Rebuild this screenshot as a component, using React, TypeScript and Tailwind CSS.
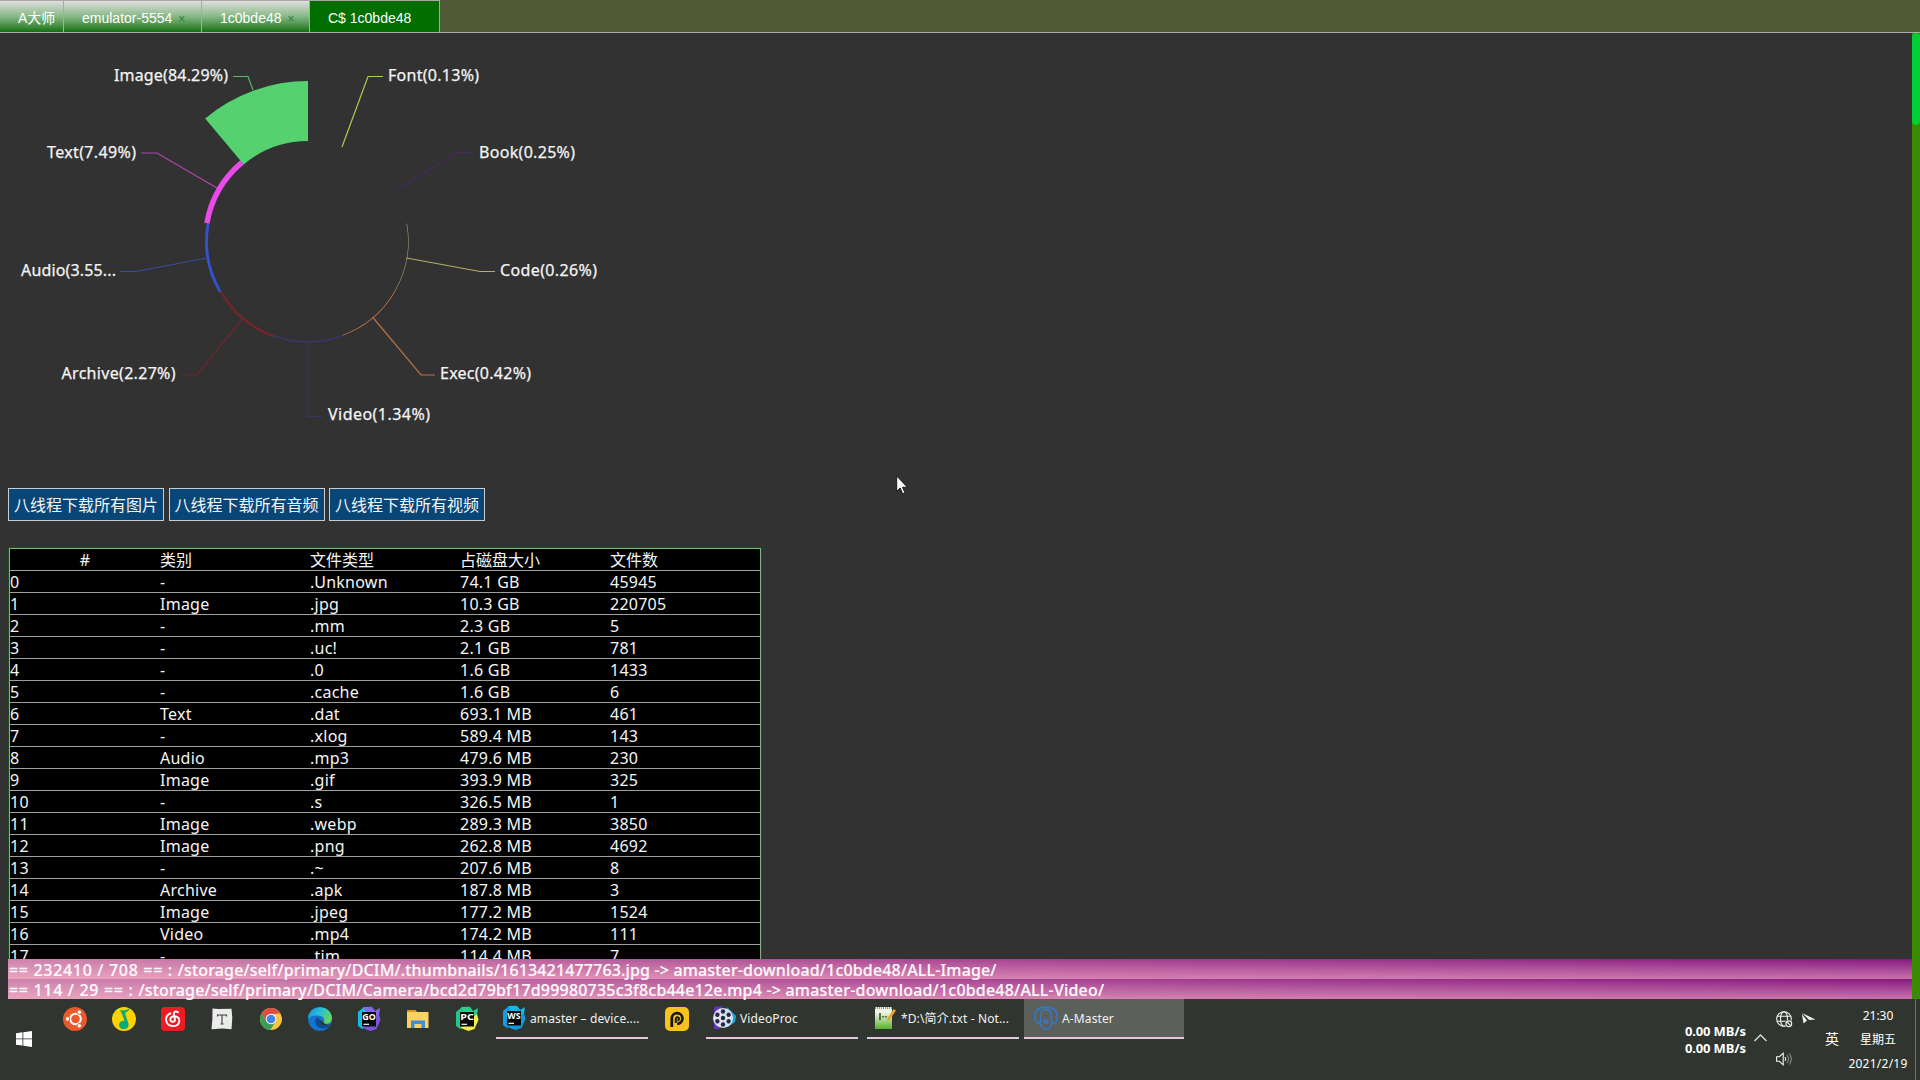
import React from "react";

const sans = "font-['Noto_Sans','Noto_Sans_CJK_SC',sans-serif]";

const CX = 308;
const CY = 208;
const pt = (r: number, deg: number) => {
  const a = (deg * Math.PI) / 180;
  return `${CX + r * Math.sin(a)} ${CY - r * Math.cos(a)}`;
};
const sector = (from: number, to: number, inner: number, outer: number) =>
  `M${pt(outer, from)}A${outer} ${outer} 0 0 1 ${pt(outer, to)}L${pt(inner, to)}A${inner} ${inner} 0 0 0 ${pt(inner, from)}Z`;

type Slice = { label: string; color: string; stroke: string; outer: number; line: string; x: number; y: number; w: number };
const slices: Slice[] = [
  { label: "Font(0.13%)", color: "#a9cf52", stroke: "#a9cf52", outer: 100, line: "342,114 368,43.500 383,43.500", x: 388, y: 48, w: 91 },
  { label: "Book(0.25%)", color: "#39304a", stroke: "#482a5e", outer: 100.6, line: "395,158 457,119.500 474,119.500", x: 479, y: 125, w: 96 },
  { label: "Code(0.26%)", color: "#a39c66", stroke: "#b6ae6c", outer: 100.6, line: "406.5,225 480,238.500 495,238.500", x: 500, y: 243, w: 97 },
  { label: "Exec(0.42%)", color: "#b87248", stroke: "#b87248", outer: 100.8, line: "372.5,284 421,342 435,342", x: 440, y: 346, w: 91 },
  { label: "Video(1.34%)", color: "#3d3466", stroke: "#3b3362", outer: 101.5, line: "308,309 308,383.500 323,383.500", x: 328, y: 387, w: 102 },
  { label: "Archive(2.27%)", color: "#7a242a", stroke: "#6e262b", outer: 102.2, line: "243,285 197,342 181,342", x: 61.5, y: 346, w: 114 },
  { label: "Audio(3.55...", color: "#3651cd", stroke: "#364da6", outer: 102.9, line: "207,225 136,238.500 120,238.500", x: 21, y: 243, w: 95 },
  { label: "Text(7.49%)", color: "#ea4aea", stroke: "#b444b4", outer: 105.4, line: "217,155 157,120 141,120", x: 47, y: 125, w: 89 },
  { label: "Image(84.29%)", color: "#55d26f", stroke: "#55b86b", outer: 160, line: "253,57 248,43.500 233,43.500", x: 114, y: 48, w: 114 },
];

const rows = [
  ["-", ".Unknown", "74.1 GB", "45945"],
  ["Image", ".jpg", "10.3 GB", "220705"],
  ["-", ".mm", "2.3 GB", "5"],
  ["-", ".uc!", "2.1 GB", "781"],
  ["-", ".0", "1.6 GB", "1433"],
  ["-", ".cache", "1.6 GB", "6"],
  ["Text", ".dat", "693.1 MB", "461"],
  ["-", ".xlog", "589.4 MB", "143"],
  ["Audio", ".mp3", "479.6 MB", "230"],
  ["Image", ".gif", "393.9 MB", "325"],
  ["-", ".s", "326.5 MB", "1"],
  ["Image", ".webp", "289.3 MB", "3850"],
  ["Image", ".png", "262.8 MB", "4692"],
  ["-", ".~", "207.6 MB", "8"],
  ["Archive", ".apk", "187.8 MB", "3"],
  ["Image", ".jpeg", "177.2 MB", "1524"],
  ["Video", ".mp4", "174.2 MB", "111"],
  ["-", ".tim", "114.4 MB", "7"],
];

function Tabs() {
  const tab =
    "flex h-8 items-center border-r border-t border-[#a9a9a9] bg-linear-to-b from-[#e2dede] via-[#85b885] to-[#087208] pt-1 text-[14px] whitespace-nowrap text-white";
  const close = <span className="ml-[6px] text-[12px] leading-none text-[#2d7d3f]">×</span>;
  return (
    <nav className="flex h-[33px] border-b border-[#a9a9a9] bg-[#505a35] font-['Liberation_Sans','Noto_Sans_CJK_SC',sans-serif]">
      <div className={`${tab} w-16 pl-[18px]`}>A大师</div>
      <div className={`${tab} w-[138px] pl-[18px]`}>emulator-5554{close}</div>
      <div className={`${tab} w-[108px] pl-[18px]`}>1c0bde48{close}</div>
      <div className="flex h-8 w-[130px] items-center border-r border-t border-[#a9a9a9] bg-[#006e00] pt-1 pl-[18px] text-[14px] text-white">
        C$ 1c0bde48
      </div>
    </nav>
  );
}

function RoseChart() {
  return (
    <svg className="block h-[455px] w-[640px]" viewBox="0 0 640 455">
      {slices.map((s, i) => (
        <g key={s.label}>
          {i > 0 && <path d={sector(i * 40, i * 40 + 40, 100, s.outer)} fill={s.color} />}
          <polyline points={s.line} fill="none" stroke={s.stroke} strokeWidth="1.200" />
          <text x={s.x} y={s.y} textLength={s.w} fill="#f4f4f4" stroke="#f4f4f4" strokeWidth=".25" fontSize="16" className={sans}>
            {s.label}
          </text>
        </g>
      ))}
    </svg>
  );
}

function FileTable() {
  return (
    <div className="mt-[26px] ml-2 w-[754px] border border-[#1c4f20]">
      <div className="border border-[#7fb382] bg-black text-[16px] leading-[22px] tracking-[0.25px] text-[#f5f5f5]">
        <div className="grid h-[22px] grid-cols-[150px_150px_150px_150px_150px] border-b border-[#a0a0a0] tracking-normal">
          <span className="text-center">#</span>
          <span>类别</span>
          <span>文件类型</span>
          <span>占磁盘大小</span>
          <span>文件数</span>
        </div>
        {rows.map((r, i) => (
          <div key={i} className="grid h-[22px] grid-cols-[150px_150px_150px_150px_150px] border-b border-[#a0a0a0]">
            <span>{i}</span>
            {r.map((c, j) => (
              <span key={j}>{c}</span>
            ))}
          </div>
        ))}
      </div>
    </div>
  );
}

const Ubuntu = () => (
  <svg className="size-6" viewBox="0 0 24 24">
    <circle cx="12" cy="12" r="12" fill="#e9592a" />
    <circle cx="12.5" cy="12" r="5.3" fill="none" stroke="#fff" strokeWidth="2" />
    {[[4.600, 12], [16.300, 5.200], [16.300, 18.800]].map(([x, y]) => (
      <circle key={`${x}-${y}`} cx={x} cy={y} r="2.300" fill="#fff" stroke="#e9592a" strokeWidth="1" />
    ))}
  </svg>
);
const QQMusic = () => (
  <svg className="size-6" viewBox="0 0 24 24">
    <circle cx="12" cy="12" r="12" fill="#fdd400" />
    <path d="M8 3c4 1 7 0 10-2-1 3-4 4-5 5l3.500 11-3-1-3.500-9z" fill="#08a878" />
    <ellipse cx="11.8" cy="18" rx="4.8" ry="4.3" fill="#08a878" />
  </svg>
);
const Netease = () => (
  <svg className="size-6" viewBox="0 0 24 24">
    <rect width="24" height="24" rx="4" fill="#ef1b22" />
    <path
      d="M9.300 6.300C3 9 3.800 19 12 19c7.500 0 8.500-9.300 1.800-9.800-5.300-.3-5.800 5.600-2 5.600 3 0 2.300-2.800 1.200-6.800-.8-3 1.500-4.500 4-2.700"
      fill="none"
      stroke="#fff"
      strokeWidth="1.900"
      strokeLinecap="round"
    />
  </svg>
);
const Typora = () => (
  <svg className="size-6" viewBox="0 0 24 24">
    <path d="M2.500 1.500l6 .6 13-.3.800 9-.8 11.400-9-.6-11 .6L2.400 12z" fill="#ececec" />
    <path d="M7.500 9.500V8h9v1.500M12 8v9m-1.500 0h3" stroke="#3b3b3b" strokeWidth="1.100" fill="none" />
  </svg>
);
const Chrome = () => (
  <svg className="size-6" viewBox="0 0 24 24">
    <circle cx="12" cy="12" r="11" fill="#f8c63c" />
    <path d="M2.500 6.500A11 11 0 0 1 21.500 6.500L12 7l-4.300 7.500z" fill="#d95040" />
    <path d="M2.500 6.500l5.200 8 4.300 2.500 4.200-2-5 8A11 11 0 0 1 2.500 6.500z" fill="#3b9c56" />
    <circle cx="12" cy="12" r="5.300" fill="#f4f4f4" />
    <circle cx="12" cy="12" r="4.300" fill="#4582ee" />
  </svg>
);
const Edge = () => (
  <svg className="size-6" viewBox="0 0 24 24">
    <defs>
      <linearGradient id="edgeTop" x2="1" y2=".4">
        <stop stopColor="#1590d8" />
        <stop offset=".55" stopColor="#2cc0d4" />
        <stop offset="1" stopColor="#64d55c" />
      </linearGradient>
    </defs>
    <circle cx="12" cy="12" r="12" fill="#1373ce" />
    <path d="M.2 10C2-3 23-3 24 11c0 5-4.500 6.500-8.500 5.500 2-3 0-8-5-8C5.500 8 1 9 .2 13z" fill="url(#edgeTop)" />
    <path d="M8.500 10c-4 8 3 14 12 10.300 1-.5 1.600-1.300 1.900-2-5 2.300-11.200.2-10-5.300z" fill="#0c4a94" />
    <path d="M12.200 13c-1 5 5 7.500 11 4.500V17c-3 1-6 .5-7.300-1z" fill="#30362f" />
  </svg>
);
const JetBrains = ({ label, colors }: { label: string; colors: string[] }) => (
  <svg className="size-6 overflow-visible" viewBox="0 0 24 24">
    <path d="M1 5L7 0l9 2-2 14-9 6-4-3z" fill={colors[0]} />
    <path d="M6 0l9-.2L18 4l5-3-1 7-8 5z" fill={colors[1]} />
    <path d="M22 7l1.500 6-4 9-6 2-8-3z" fill={colors[2]} />
    <rect x="5" y="5" width="14" height="14.500" fill="#080808" />
    <text x="5.300" y="12.500" fontSize="9" textLength="13.500" lengthAdjust="spacingAndGlyphs" fontWeight="700" fill="#fff" className={sans}>
      {label}
    </text>
    <path d="M6.500 17.300h5.500" stroke="#fff" strokeWidth="1.200" />
  </svg>
);
const Folder = () => (
  <svg className="size-6" viewBox="0 0 24 24">
    <path d="M1 3h8l2 2h11.500v16H1z" fill="#fbd160" />
    <path d="M1 3h8l1.500 2H1z" fill="#dc9a12" />
    <path d="M5 21v-7.500h14V21h-3.500v-4h-7v4z" fill="#3d8fd6" />
  </svg>
);
const Potplayer = () => (
  <svg className="size-6" viewBox="0 0 24 24">
    <rect width="24" height="24" rx="5" fill="#fac21c" />
    <path d="M6.800 20v-8.500a5.300 5.300 0 1 1 5.400 5.300" stroke="#16191b" strokeWidth="2.800" fill="none" />
    <path d="M10.800 16v-4a1.600 1.600 0 1 1 1.600 1.500" stroke="#16191b" strokeWidth="2" fill="none" />
  </svg>
);
const VideoProc = () => (
  <svg className="size-6" viewBox="0 0 24 24">
    <path d="M2 1l9-1-5 8-4 3zM2 13l6 10H2z" fill="#6335bd" />
    <path d="M15 1l9 9-1 6-7 5z" fill="#19a8e0" />
    <circle cx="11" cy="12" r="10" fill="#dde1ee" />
    {[0, 60, 120, 180, 240, 300].map((a) => (
      <circle key={a} cx="11" cy="5.500" r="2.200" fill="#232b45" transform={`rotate(${a} 11 12)`} />
    ))}
    <circle cx="11" cy="12" r="2.200" fill="#232b45" />
  </svg>
);
const Notepad = () => (
  <svg className="size-6" viewBox="0 0 24 24">
    <defs>
      <linearGradient id="note" x2="0" y2="1">
        <stop offset=".25" stopColor="#eef5e2" />
        <stop offset="1" stopColor="#55b22c" />
      </linearGradient>
    </defs>
    <path d="M2 1h17v22H2z" fill="url(#note)" />
    <path d="M2 2h17" stroke="#8d9b82" strokeWidth="2" strokeDasharray="1 1" />
    <path d="M7 7v7m3-4v1.500m3-1.500v1.500" stroke="#334a2b" strokeWidth="1.500" />
    <path d="M20.500 3l2.500 1.500-7 10-2 1 .5-3z" fill="#eba321" />
  </svg>
);
const AMaster = () => (
  <svg className="size-6" viewBox="0 0 24 24" fill="none" stroke="#3178d4" strokeWidth="1.500">
    <path d="M8.500 1.500C-1.500 2.500-.5 17 4.500 17.500c3.500-1 1.500-9 3.500-12.500 2-2.500 6-2.500 8 0 2 3.500 0 11.500 3.500 12.500 5-.5 6-15-4-16M8.500 1.500C10 1 14 1 15.500 1.500" />
    <path d="M6.500 17c.5 8 10.500 8 11 0M9.800 15.500c1-2 3.400-2 4.400 0L12 17.500z" />
  </svg>
);

function Task({ icon, title, wide }: { icon: React.ReactNode; title: string; wide?: boolean }) {
  return (
    <div
      className={`flex h-10 items-center gap-[4px] border-b-2 border-[#e3c7dd] text-[12px] tracking-[0.12px] ${wide ? "w-40 bg-[#5c605b] pl-[10px]" : "w-[152px] pl-[6px]"}`}
    >
      {icon}
      <span className="pt-0.5 whitespace-nowrap text-[#f2f2f2]">{title}</span>
    </div>
  );
}

function Taskbar() {
  return (
    <footer className="flex h-[81px] bg-[#30362f] text-white">
      <svg className="mt-8 ml-4 size-4" viewBox="0 0 16 16" fill="#fff">
        <path d="M0 2.200L6.500 1.300v6.200H0zM7.300 1.200L16 0v7.500H7.300zM0 8.300h6.500v6.300L0 13.700zM7.300 8.300H16V16l-8.700-1.200z" />
      </svg>
      <div className="ml-[31px] flex h-10 gap-[25px] pt-2">
        <Ubuntu />
        <QQMusic />
        <Netease />
        <Typora />
        <Chrome />
        <Edge />
        <JetBrains label="GO" colors={["#16bde0", "#8267e8", "#7b54dc"]} />
        <Folder />
        <JetBrains label="PC" colors={["#21c78c", "#2ecc88", "#f3ec4c"]} />
      </div>
      <div className="ml-[17px] flex h-10 w-[700px]">
        <Task title="amaster – device...." icon={<JetBrains label="WS" colors={["#109fe0", "#12b8e8", "#0e9be0"]} />} />
        <div className="ml-[17px] pt-2">
          <Potplayer />
        </div>
        <div className="ml-[17px]">
          <Task title="VideoProc" icon={<VideoProc />} />
        </div>
        <div className="ml-[9px]">
          <Task title="*D:\简介.txt - Not..." icon={<Notepad />} />
        </div>
        <div className="ml-[5px]">
          <Task wide title="A-Master" icon={<AMaster />} />
        </div>
      </div>
      <div className="ml-auto flex">
        <div className="mt-6 w-[64px] text-[13px] leading-[17px] font-bold tracking-[-0.15px] whitespace-nowrap">
          <div>0.00 MB/s</div>
          <div>0.00 MB/s</div>
        </div>
        <svg className="mt-[35px] ml-[5px] h-[8px] w-[13px]" viewBox="0 0 13 8" fill="none" stroke="#ddd" strokeWidth="1.300">
          <path d="M.5 7l6-6 6 6" />
        </svg>
        <div className="ml-[9px] flex w-4 flex-col">
          <svg className="mt-3 size-[17px]" viewBox="0 0 17 17" fill="none" stroke="#f2f2f2" strokeWidth="1.100">
            <circle cx="8" cy="8" r="7.300" />
            <ellipse cx="8" cy="8" rx="3.500" ry="7.300" />
            <path d="M1 5.300h14M1 10.300h14" />
            <circle cx="12.800" cy="12.800" r="4" fill="#30362f" stroke="none" />
            <circle cx="12.800" cy="12.800" r="2.900" />
            <path d="M11 11l3.600 3.600" />
          </svg>
          <svg className="mt-6 h-[14px] w-[17px]" viewBox="0 0 17 14" fill="none" stroke="#f2f2f2" strokeWidth="1.100">
            <path d="M.6 4.700h2.800L7.200 1.200v11.600L3.400 9.300H.6z" />
            <path d="M9 5q1.500 2 0 4" />
            <path d="M11 3q3 4 0 8M13.300 1.500q4 5.500 0 11" stroke="#8a8f89" />
          </svg>
        </div>
        <svg className="mt-[14px] ml-[9px] h-[11px] w-[15px]" viewBox="0 0 15 11" fill="#f2f2f2">
          <path d="M1 0l13.500 6.500L8.300 7z" />
          <path d="M.8 1L6 7.500 2.600 10.500z" />
        </svg>
        <div className="mt-[30px] ml-[9px] w-[14px] text-[14px] leading-5">英</div>
        <div className="mt-[5px] ml-[9px] w-[60px] text-center text-[12px] leading-6 whitespace-nowrap">
          <div>21:30</div>
          <div>星期五</div>
          <div className="tracking-[0.25px]">2021/2/19</div>
        </div>
        <div className="ml-[7px] h-full w-[5px] border-l border-[#6f746e]" />
      </div>
    </footer>
  );
}

function Progress({ count, path, track }: { count: string; path: string; track: string }) {
  return (
    <div className="h-5 bg-linear-to-b from-[#861680] to-[#ca70ac]">
      <div className="h-5 bg-linear-to-r from-[#ffc8cc]/60 via-[#ffb8c4]/28 to-transparent">
        <div className="pl-px text-[16px] leading-[22px] font-medium whitespace-pre text-white/95 [-webkit-text-stroke:0.2px_white]">
          <span className="tracking-[0.68px]">{count}</span>
          <span className={track}>{path}</span>
        </div>
      </div>
    </div>
  );
}

export default function App() {
  return (
    <div className={`h-[1080px] w-[1920px] overflow-hidden bg-[#323232] ${sans}`}>
      <Tabs />
      <div className="flex h-[966px]">
        <main className="flex h-full w-[1912px] flex-col">
          <div className="h-[926px] overflow-hidden">
            <RoseChart />
            <div className="flex gap-[4.5px] pl-2">
              {["八线程下载所有图片", "八线程下载所有音频", "八线程下载所有视频"].map((t) => (
                <button
                  key={t}
                  className="h-[33px] w-[156px] border border-[#c8cdd2] bg-[#094678] pt-px text-[16px] leading-[31px] whitespace-nowrap text-[#f5f5f5]"
                >
                  {t}
                </button>
              ))}
            </div>
            <FileTable />
          </div>
          <div className="ml-2">
            <Progress
              track="tracking-[0.155px]"
              count="== 232410 / 708 == : "
              path="/storage/self/primary/DCIM/.thumbnails/1613421477763.jpg -> amaster-download/1c0bde48/ALL-Image/"
            />
            <Progress
              track="tracking-[0.2px]"
              count="== 114 / 29 == : "
              path="/storage/self/primary/DCIM/Camera/bcd2d79bf17d99980735c3f8cb44e12e.mp4 -> amaster-download/1c0bde48/ALL-Video/"
            />
          </div>
        </main>
        <div className="w-2 bg-[#398a00]">
          <div className="h-[92px] rounded-sm bg-[#00cf35]" />
        </div>
      </div>
      <Taskbar />
      <svg className="pointer-events-none absolute top-[475px] left-[896px] h-5 w-3" viewBox="0 0 12 20">
        <path d="M.7 1v15.300l3.500-3.300 2.400 5.700 2.300-1-2.400-5.500h4.800z" fill="#fff" stroke="#111" strokeWidth=".9" />
      </svg>
    </div>
  );
}
